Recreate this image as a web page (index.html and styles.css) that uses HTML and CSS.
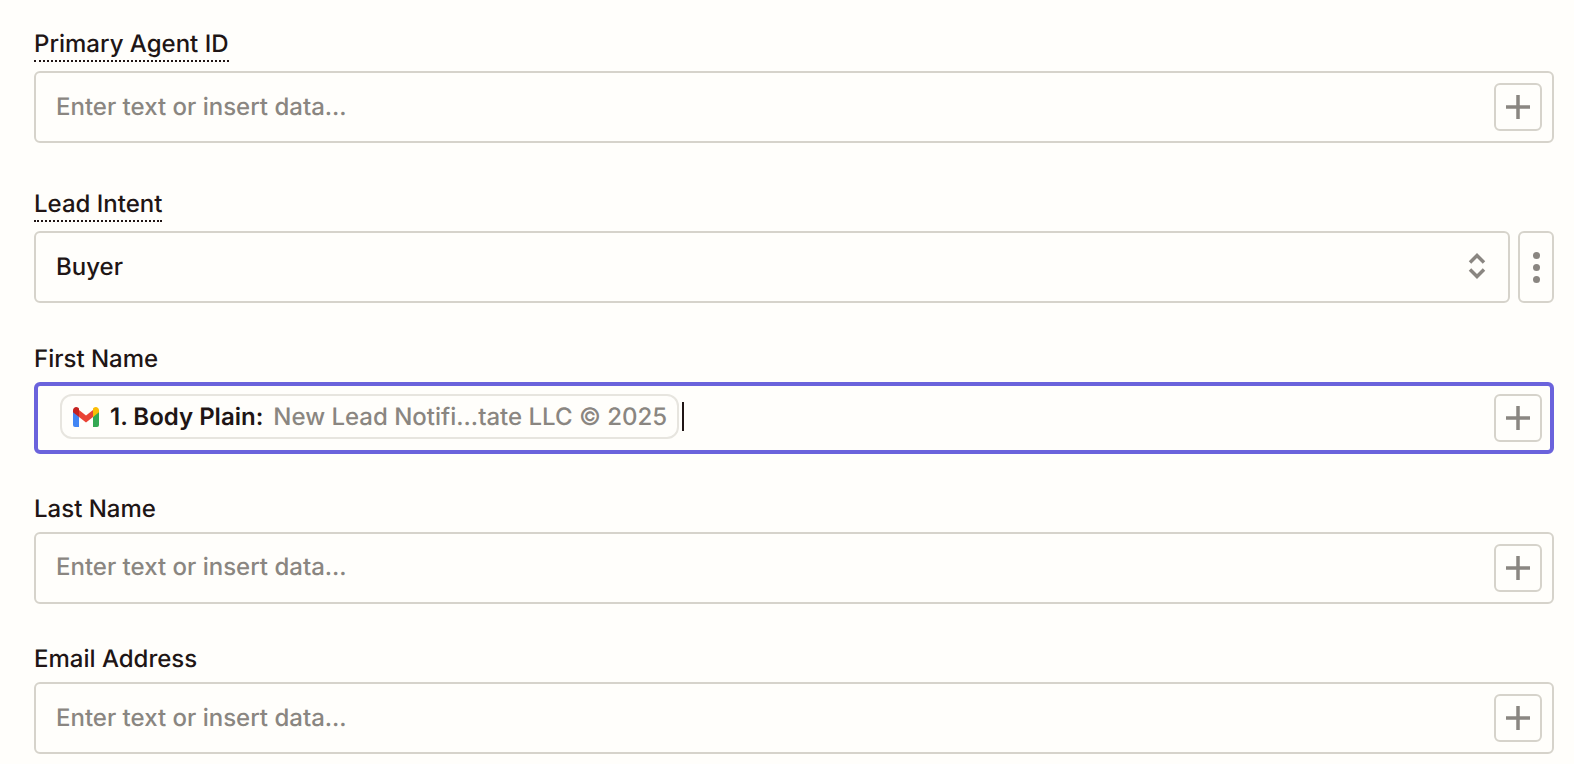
FILE: index.html
```html
<!DOCTYPE html>
<html lang="en">
<head>
  <meta charset="UTF-8">
  <meta name="viewport" content="width=device-width, initial-scale=1.0">
  <title>Action fields</title>
  <link rel="stylesheet" href="styles.css">
</head>
<body>

<form class="fields">
  <!-- Primary Agent ID -->
  <div class="field field-spaced">
    <div class="label-row"><span class="label label-hint">Primary Agent ID</span></div>
    <div class="input">
      <span class="placeholder">Enter text or insert data...</span>
      <button type="button" class="insert-button" aria-label="Insert data">
        <svg width="24" height="24" viewBox="0 0 24 24"><path d="M12 0v24M0 12h24" /></svg>
      </button>
    </div>
  </div>

  <!-- Lead Intent -->
  <div class="field">
    <div class="label-row"><span class="label label-hint">Lead Intent</span></div>
    <div class="select-row">
      <div class="input select">
        <span class="value">Buyer</span>
        <svg class="chevrons" width="18" height="28" viewBox="0 0 18 28"><path d="M2 10.500L9 3.500l7 7M2 17.500L9 24.500l7-7" /></svg>
      </div>
      <button type="button" class="more-button" aria-label="More">
        <span class="dot"></span><span class="dot"></span><span class="dot"></span>
      </button>
    </div>
  </div>

  <!-- First Name -->
  <div class="field">
    <div class="label-row"><span class="label">First Name</span></div>
    <div class="input input-focus">
      <span class="pill">
        <svg class="gmail" width="26" height="20" viewBox="0 0 26 20">
          <path fill="#4285f4" d="M0 3v15a2 2 0 0 0 2 2h4V9.500z" />
          <path fill="#34a853" d="M26 3v15a2 2 0 0 1-2 2h-4V9.500z" />
          <path fill="#ea4335" d="M6 10V3l7 5.500L20 3v7l-7 5.500z" />
          <path fill="#c5221f" d="M0 3.200C0 .6 3-.9 5 .6L6 1.400V10L0 5.300z" />
          <path fill="#fbbc04" d="M26 3.200C26 .6 23-.9 21 .6l-1 .8V10l6-4.700z" />
        </svg>
        <span class="pill-name">1. Body Plain:</span>
        <span class="pill-value">New Lead Notifi...tate LLC © 2025</span>
      </span>
      <span class="caret"></span>
      <button type="button" class="insert-button" aria-label="Insert data">
        <svg width="24" height="24" viewBox="0 0 24 24"><path d="M12 0v24M0 12h24" /></svg>
      </button>
    </div>
  </div>

  <!-- Last Name -->
  <div class="field">
    <div class="label-row"><span class="label">Last Name</span></div>
    <div class="input">
      <span class="placeholder">Enter text or insert data...</span>
      <button type="button" class="insert-button" aria-label="Insert data">
        <svg width="24" height="24" viewBox="0 0 24 24"><path d="M12 0v24M0 12h24" /></svg>
      </button>
    </div>
  </div>

  <!-- Email Address -->
  <div class="field">
    <div class="label-row"><span class="label">Email Address</span></div>
    <div class="input">
      <span class="placeholder">Enter text or insert data...</span>
      <button type="button" class="insert-button" aria-label="Insert data">
        <svg width="24" height="24" viewBox="0 0 24 24"><path d="M12 0v24M0 12h24" /></svg>
      </button>
    </div>
  </div>
</form>

</body>
</html>
```

FILE: styles.css
```css
* {box-sizing: border-box;}

html, body {height: 100%;}

body {
  margin: 0;
  padding: 0 20px 0 34px;
  background-color: #fffefb;
  font-family: Inter, "Liberation Sans", sans-serif;
  color: #201515;
  overflow: hidden;
  text-rendering: geometricPrecision;
}

.fields {
  display: flex;
  flex-direction: column;
  gap: 36.3px;
  padding-top: 29px;
}

.field-spaced {margin-bottom: 10px;}

.label-row {
  display: flex;
  height: 33px;
  margin-bottom: 9px;
}

.label {
  padding-top: 4px;
  font-size: 24px;
  font-weight: 500;
  line-height: 29px;
}

/* Dotted line under labels that have a help text */
.label-hint {
  height: 33px;
  padding-top: 0;
  border-bottom: 2px dotted #201515;
}

.input {
  display: flex;
  align-items: center;
  height: 72px;
  padding: 0 10px 0 20px;
  border: 2px solid #d6d3cb;
  border-radius: 6px;
  font-size: 24px;
  font-weight: 500;
}

.placeholder, .value {margin-bottom: 2px;}

.placeholder {color: #8a8681;}

.insert-button {
  display: flex;
  align-items: center;
  justify-content: center;
  width: 48px;
  height: 48px;
  margin-left: auto;
  padding: 0;
  background: none;
  border: 2px solid #d6d3cb;
  border-radius: 6px;
}

.insert-button path {
  fill: none;
  stroke: #8a8681;
  stroke-width: 3.500;
}

/* Select with the three dots button */
.select-row {
  display: flex;
  gap: 8px;
}

.select {
  flex: 1;
  padding-right: 22px;
}

.chevrons {
  margin-left: auto;
  margin-bottom: 2px;
}

.chevrons path {
  fill: none;
  stroke: #8a8681;
  stroke-width: 3.500;
}

.more-button {
  display: flex;
  flex-direction: column;
  align-items: center;
  justify-content: center;
  gap: 5px;
  width: 36px;
  height: 72px;
  padding: 0;
  background: none;
  border: 2px solid #d6d3cb;
  border-radius: 6px;
}

.dot {
  width: 7px;
  height: 7px;
  border-radius: 50%;
  background-color: #8a8681;
}

/* Focused input with the mapped field */
.input-focus {
  border: 4px solid #6b63dc;
  padding-left: 22px;
  padding-right: 8px;
}

.pill {
  display: flex;
  align-items: center;
  height: 45px;
  margin-bottom: 2px;
  padding: 0 10px 0 11px;
  border: 2px solid #e7e5df;
  border-radius: 12px;
}

.gmail {
  flex-shrink: 0;
  margin-right: 11px;
}

.pill-name {
  font-weight: 600;
  margin-right: 10px;
}

.pill-value {color: #8a8681;}

.caret {
  width: 2px;
  height: 29px;
  margin-left: 3px;
  margin-bottom: 2px;
  background-color: #201515;
}
```
